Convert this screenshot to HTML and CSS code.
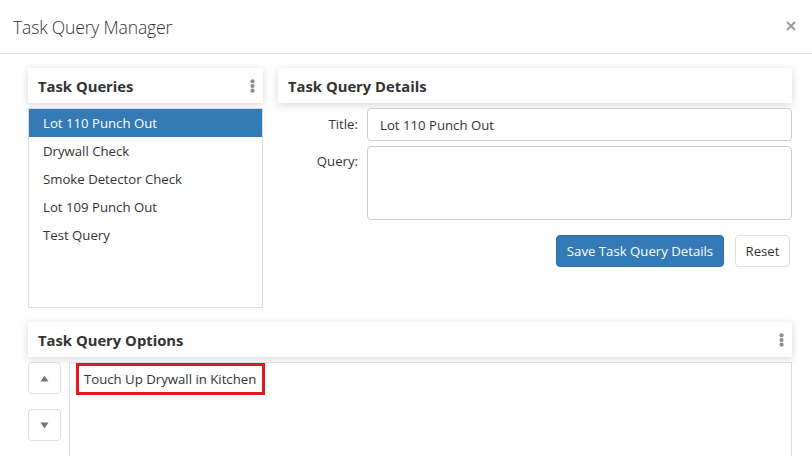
FILE: index.html
```html
<!DOCTYPE html>
<html>
<head>
<meta charset="utf-8">
<link rel="stylesheet" href="styles.css">
</head>
<body>
<div class="modal">
  <div class="modal-header">
    <h4 class="modal-title">Task Query Manager</h4>
    <button class="close" aria-label="Close">
      <svg width="10" height="10" viewBox="0 0 10 10"><path d="M1 1L9 9M9 1L1 9" stroke="#9a9a9a" stroke-width="1.8" fill="none"/></svg>
    </button>
  </div>
  <div class="modal-body">
    <div class="top-row">
      <div class="col-left">
        <div class="panel-head">
          <span class="panel-title">Task Queries</span>
          <svg class="kebab" width="5" height="14" viewBox="0 0 5 14"><circle cx="2.5" cy="2.3" r="2.1" fill="#8c8c8c"/><circle cx="2.5" cy="7" r="2.1" fill="#8c8c8c"/><circle cx="2.5" cy="11.7" r="2.1" fill="#8c8c8c"/></svg>
        </div>
        <ul class="query-list">
          <li class="active">Lot 110 Punch Out</li>
          <li>Drywall Check</li>
          <li>Smoke Detector Check</li>
          <li>Lot 109 Punch Out</li>
          <li>Test Query</li>
        </ul>
      </div>
      <div class="col-right">
        <div class="panel-head">
          <span class="panel-title">Task Query Details</span>
        </div>
        <div class="form-row">
          <label class="form-label">Title:</label>
          <input class="form-input" type="text" value="Lot 110 Punch Out">
        </div>
        <div class="form-row">
          <label class="form-label">Query:</label>
          <textarea class="form-textarea"></textarea>
        </div>
        <div class="actions">
          <button class="btn btn-primary">Save Task Query Details</button>
          <button class="btn btn-default">Reset</button>
        </div>
      </div>
    </div>
    <div class="options">
      <div class="panel-head">
        <span class="panel-title">Task Query Options</span>
        <svg class="kebab" width="5" height="14" viewBox="0 0 5 14"><circle cx="2.5" cy="2.3" r="2.1" fill="#8c8c8c"/><circle cx="2.5" cy="7" r="2.1" fill="#8c8c8c"/><circle cx="2.5" cy="11.7" r="2.1" fill="#8c8c8c"/></svg>
      </div>
      <div class="options-body">
        <div class="mover">
          <button class="move-btn"><svg width="9" height="7" viewBox="0 0 9 7"><path d="M4.5 0.5L8.5 6.5H0.5Z" fill="#777"/></svg></button>
          <button class="move-btn"><svg width="9" height="7" viewBox="0 0 9 7"><path d="M0.5 0.5H8.5L4.5 6.5Z" fill="#777"/></svg></button>
        </div>
        <div class="option-list">
          <div class="option-item">Touch Up Drywall in Kitchen</div>
        </div>
      </div>
    </div>
  </div>
</div>
</body>
</html>
```
FILE: styles.css
```css
* { box-sizing: border-box; }
html, body { margin: 0; padding: 0; background: #fff; overflow: hidden; }
body {
  font-family: "Open Sans", "Noto Sans", Arial, sans-serif;
  font-size: 13.2px;
  color: #333;
  width: 812px;
  height: 456px;
}
.modal { width: 812px; height: 456px; overflow: hidden; }
.modal-header {
  height: 54px;
  display: flex;
  align-items: center;
  justify-content: space-between;
  padding: 0 16px 0 13px;
  border-bottom: 1px solid #e5e5e5;
}
.modal-title {
  margin: 0;
  font-size: 17.6px;
  font-weight: 300;
  color: #333;
  letter-spacing: -0.2px;
}
.close {
  border: 0;
  background: none;
  padding: 0;
  width: 10px;
  height: 10px;
  display: flex;
  margin-top: -2px;
}
.modal-body { padding: 14px 20px 0 28px; }
.top-row { display: flex; gap: 15px; }
.col-left { width: 235px; flex: none; }
.col-right { flex: 1; }
.panel-head {
  height: 35px;
  background: #fff;
  box-shadow: 0 2px 8px rgba(0,0,0,0.16);
  display: flex;
  align-items: center;
  justify-content: space-between;
  padding: 0 8px 0 10px;
}
.panel-title { font-weight: 700; font-size: 14.8px; color: #333; }
.kebab { display: block; }
.query-list {
  list-style: none;
  margin: 5px 0 0;
  padding: 0;
  height: 200px;
  border: 1px solid #ddd;
}
.query-list li {
  height: 28px;
  line-height: 29px;
  padding-left: 14px;
  color: #333;
}
.query-list li.active { background: #337ab7; color: #fff; }
.form-row { display: flex; align-items: flex-start; margin-top: 5px; }
.form-row:first-of-type { margin-top: 6px; }
.form-label {
  width: 80px;
  text-align: right;
  margin-right: 9px;
  line-height: 33px;
  color: #333;
}
.form-row:nth-of-type(3) .form-label { line-height: 30px; }
.form-input, .form-textarea {
  flex: 1;
  border: 1px solid #ccc;
  border-radius: 4px;
  font-family: inherit;
  font-size: 13.2px;
  color: #333;
  padding: 0 12px;
  margin: 0;
}
.form-input { height: 33px; }
.form-textarea { height: 74px; resize: none; display: block; }
.actions {
  display: flex;
  justify-content: flex-end;
  gap: 11px;
  margin-top: 15px;
  padding-right: 2px;
}
.btn {
  height: 32px;
  border-radius: 4px;
  font-family: inherit;
  font-size: 13.2px;
  padding: 0;
  margin: 0;
  white-space: nowrap;
}
.btn-primary { background: #337ab7; border: 1px solid #2e6da4; color: #fff; width: 168px; }
.btn-default { background: #fff; border: 1px solid #ddd; color: #333; width: 55px; }
.options { margin-top: 14px; }
.options-body { display: flex; margin-top: 5px; }
.mover {
  width: 41px;
  flex: none;
  display: flex;
  flex-direction: column;
  gap: 15px;
}
.move-btn {
  width: 33px;
  height: 32px;
  border: 1px solid #ddd;
  border-radius: 4px;
  background: #fff;
  padding: 0;
  display: flex;
  align-items: center;
  justify-content: center;
}
.option-list {
  flex: 1;
  height: 94px;
  border: 1px solid #ddd;
  border-bottom: 0;
  padding: 0 6px;
}
.option-item {
  display: inline-block;
  height: 32px;
  line-height: 26px;
  border: 3px solid #e3191c;
  padding: 0 6px 0 5px;
  color: #333;
}
```
